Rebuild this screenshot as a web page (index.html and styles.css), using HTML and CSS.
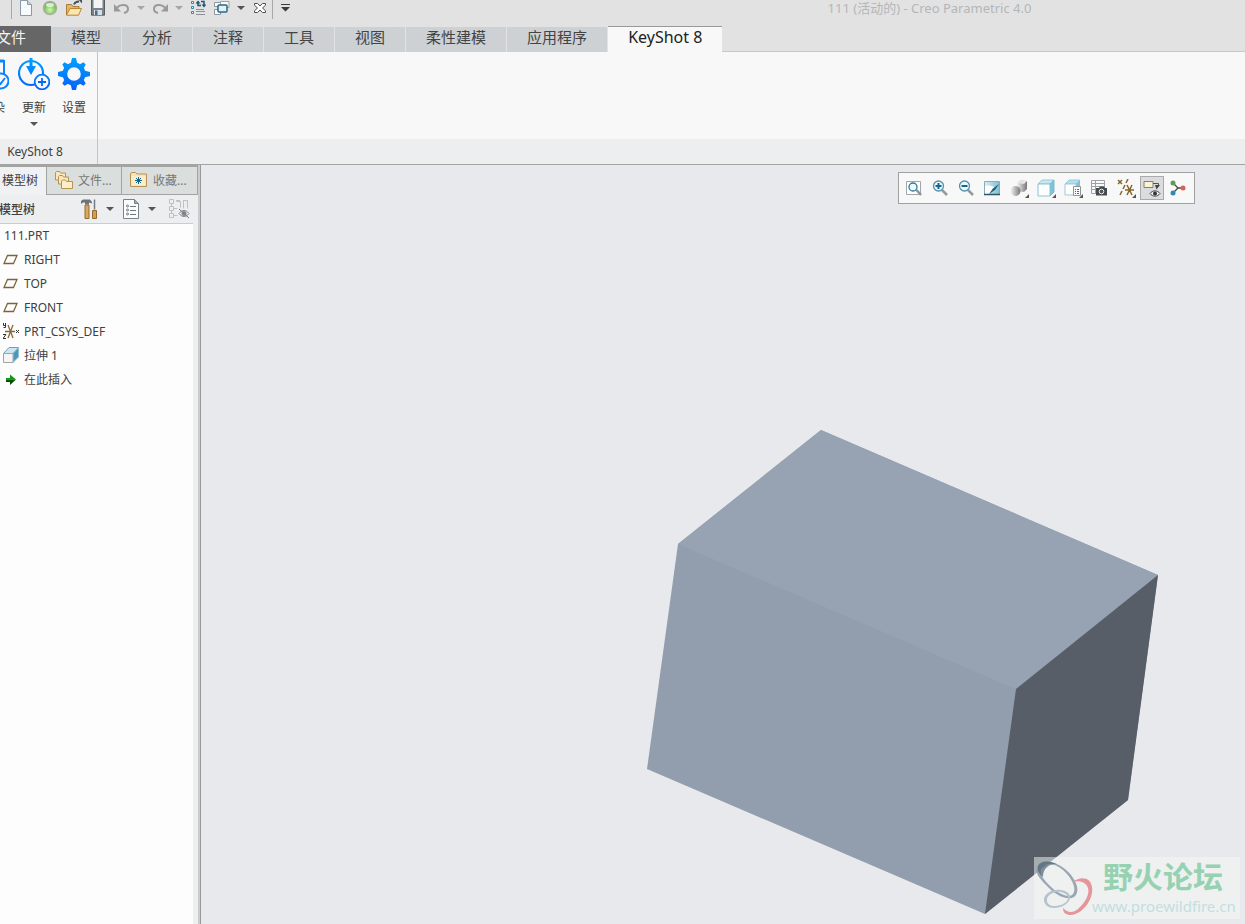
FILE: index.html
```
<!DOCTYPE html>
<html lang="zh-CN">
<head>
    <meta charset="UTF-8">
    <meta name="viewport" content="width=device-width, initial-scale=1.0">
    <title>111 (活动的) - Creo Parametric 4.0</title>
    <link rel="stylesheet" href="styles.css">
</head>
<body>
    <header class="titlebar">
        <div class="quick-access">
            <span class="divider"></span>
            <button class="quick-btn" aria-label="新建">
                <svg width="16" height="16" viewBox="0 0 16 16"><path d="M2.500 0.500h7l4 4v11h-11z" fill="#f7fbfe" stroke="#8b98a5"/><path d="M9.500 0.500v4h4" fill="#c5d3de" stroke="#8b98a5"/></svg>
            </button>
            <button class="quick-btn" aria-label="模型显示">
                <svg width="16" height="16" viewBox="0 0 16 16"><defs><radialGradient id="ball" cx=".5" cy=".65" r=".55"><stop offset="0" stop-color="#d2f5b4"/><stop offset=".6" stop-color="#8ed362"/><stop offset="1" stop-color="#76a95c"/></radialGradient></defs><circle cx="8" cy="8" r="6.500" fill="url(#ball)" stroke="#a8b0a4" stroke-width="1.500"/><ellipse cx="8" cy="5" rx="4" ry="2" fill="#d8efcb"/></svg>
            </button>
            <button class="quick-btn" aria-label="打开">
                <svg width="18" height="16" viewBox="0 0 18 16"><path d="M1.500 15V4.500h5l1.500 2h6V9" fill="#e5b765" stroke="#a97b34"/><path d="M1.500 15.200L5 8.500h11.500L13.500 15.200z" fill="#fde6ae" stroke="#b5863d"/><path d="M9 4.500c1-2.500 3-3 5-3" fill="none" stroke="#46515a" stroke-width="2"/><path d="M12.500-1.500h4.500v5z" fill="#46515a"/></svg>
            </button>
            <button class="quick-btn" aria-label="保存">
                <svg width="16" height="16" viewBox="0 0 16 16"><path d="M1 0h14v15.500H1z" fill="#7b838a"/><path d="M1.500 0v15h13V0" fill="none" stroke="#575d62"/><path d="M3.500 0h9v8h-9z" fill="#f4f4f4"/><path d="M4 10h8v5H4z" fill="#d9dee2"/><path d="M5 10.500h2.500V15H5z" fill="#427084"/></svg>
            </button>
            <button class="quick-btn" aria-label="撤消">
                <svg width="16" height="16" viewBox="0 0 16 16"><path d="M3 7.500c4-4 11-3 11 1.500 0 2-1.500 3.500-4 4" fill="none" stroke="#999" stroke-width="2"/><path d="M0 4v7.500h7z" fill="#999"/></svg>
            </button>
            <button class="quick-menu muted" aria-label="撤消列表"><span class="caret"></span></button>
            <button class="quick-btn" aria-label="重做">
                <svg width="16" height="16" viewBox="0 0 16 16"><path d="M13 7.500c-4-4-11-3-11 1.500 0 2 1.500 3.500 4 4" fill="none" stroke="#999" stroke-width="2"/><path d="M16 4v7.500H9z" fill="#999"/></svg>
            </button>
            <button class="quick-menu muted" aria-label="重做列表"><span class="caret"></span></button>
            <button class="quick-btn" aria-label="重新生成">
                <svg width="16" height="16" viewBox="0 0 16 16"><path d="M1.500 1.500h2v2h-2zM1.500 6.500h2v2h-2zM1.500 11.500h2v2h-2z" fill="#fff" stroke="#278bb1"/><path d="M6 9.500h8M6 11.500h9M6 14.500h9" stroke="#8b9196"/><path d="M11 5.500H8V2.500M11 1.500h3V5" fill="none" stroke="#1c5878" stroke-width="1.500"/><path d="M5.500 3.500L8 .5l2.500 3zM11.500 4.500L14 7.500l2.500-3z" fill="#1c5878"/></svg>
            </button>
            <button class="quick-btn" aria-label="窗口">
                <svg width="16" height="16" viewBox="0 0 16 16"><path d="M.5 2.500h9v4h-9zM.5 9.500h6v5h-6z" fill="#fafafa" stroke="#8c969d"/><path d="M6.500 1.500h8.500v6H6.500z" fill="#fafafa" stroke="#9da4aa"/><rect x="4" y="5" width="9" height="7" rx="1" fill="#e3f1f8" stroke="#286987" stroke-width="1.500"/></svg>
            </button>
            <button class="quick-menu" aria-label="窗口列表"><span class="caret"></span></button>
            <button class="quick-btn" aria-label="关闭">
                <svg width="14" height="12" viewBox="0 0 14 12"><path d="M1.500 1.500h3L7 4l2.500-2.500h3v1.700L9.500 6l3 2.800v1.700h-3L7 8l-2.500 2.500h-3V8.800L4.500 6l-3-2.800z" fill="#fff" stroke="#4d4d4d"/></svg>
            </button>
            <span class="divider"></span>
            <button class="quick-btn" aria-label="自定义快速访问工具栏">
                <svg width="9" height="8" viewBox="0 0 9 8"><path d="M0 0h9v1H0zM0 3h9L4.500 7.500z" fill="#3c3c3c"/></svg>
            </button>
        </div>
        <h1 class="window-title">111 (活动的) - Creo Parametric 4.0</h1>
    </header>

    <nav class="ribbon-tabs">
        <button class="tab tab-file">文件</button>
        <button class="tab">模型</button>
        <button class="tab">分析</button>
        <button class="tab">注释</button>
        <button class="tab">工具</button>
        <button class="tab">视图</button>
        <button class="tab">柔性建模</button>
        <button class="tab">应用程序</button>
        <button class="tab active">KeyShot 8</button>
    </nav>

    <section class="ribbon">
        <div class="group">
            <div class="group-buttons">
                <button class="big-btn">
                    <svg width="32" height="32" viewBox="0 0 32 32" fill="none" stroke="#0a84ff" stroke-width="2"><path d="M8 3h19v13M8 3v22h8"/><path d="M21 3h6" stroke-width="3"/><circle cx="24" cy="23" r="7.500" fill="#f8f8f8"/><path d="M20.500 23l3 3 4.500-6"/></svg>
                    <span>渲染</span>
                </button>
                <button class="big-btn">
                    <svg width="32" height="32" viewBox="0 0 32 32" fill="none"><defs><linearGradient id="blue" x1="0" y1="0" x2="0" y2="32" gradientUnits="userSpaceOnUse"><stop offset="0" stop-color="#00a2ff"/><stop offset="1" stop-color="#0560fa"/></linearGradient></defs><circle cx="13" cy="15" r="12" stroke="url(#blue)" stroke-width="2.200"/><path d="M11.500 0h3v8H18l-5 9-5-9h3.500z" fill="url(#blue)"/><circle cx="24" cy="24" r="7.300" fill="#f8f8f8" stroke="url(#blue)" stroke-width="1.800"/><path d="M20 24h8M24 20v8" stroke="#056af8" stroke-width="1.800"/></svg>
                    <span>更新</span>
                    <span class="caret"></span>
                </button>
                <button class="big-btn">
                    <svg width="32" height="32" viewBox="0 0 32 32"><g fill="url(#blue)"><path d="M14 0h4l1.200 5h-6.400zM14 32h4l1.200-5h-6.400zM0 14v4l5 1.200v-6.400zM32 14v4l-5 1.200v-6.400zM4.300 6.500l2.200-2.200 5 2.700L7 11.500zM27.700 6.500l-2.200-2.200-5 2.700L25 11.500zM4.300 25.500l2.200 2.200 5-2.700L7 20.500zM27.700 25.500l-2.200 2.200-5-2.700L25 20.500z"/><path fill-rule="evenodd" d="M16 4.500a11.500 11.500 0 1 0 0 23 11.500 11.500 0 0 0 0-23zm0 4.700a6.800 6.800 0 1 1 0 13.600 6.800 6.800 0 0 1 0-13.600z"/></g></svg>
                    <span>设置</span>
                </button>
            </div>
            <div class="group-label">KeyShot 8</div>
        </div>
        <div class="ribbon-rest"></div>
    </section>

    <main class="workspace">
        <aside class="navigator">
            <div class="nav-tabs">
                <button class="nav-tab active">模型树</button>
                <button class="nav-tab">
                    <svg width="20" height="20" viewBox="0 0 20 20" fill="#fae7bd" stroke="#b69355"><path d="M1.500 10V2.500l1-1h3l1 1.500h5V10z"/><path d="M4.500 14V6.500l1-1h3l1 1.500h5v7z"/><path d="M7.500 18.500V11l1-1h3l1 1.500h6v7z" fill="#fdedc8"/></svg>
                    文件...
                </button>
                <button class="nav-tab">
                    <svg width="17" height="17" viewBox="0 0 17 17"><path d="M.5 15.500V3l1-1.500h4L7 3h9.500v12.500z" fill="#f6e2b4" stroke="#b69355"/><path d="M1.500 5h14v9.500h-14z" fill="#fbedcb"/><path d="M8.500 6v7M5 9.500h7M6 7l5 5M11 7l-5 5" stroke="#166482"/></svg>
                    收藏...
                </button>
            </div>
            <div class="tree-header">
                <h2>模型树</h2>
                <div class="tree-tools">
                    <button class="tree-btn" aria-label="设置">
                        <svg width="18" height="20" viewBox="0 0 18 20"><path d="M1 5V2l2-1.500h7L12 3v1.500L9 3.500v2H5v-2H3z" fill="#6c747b"/><path d="M5 6h4v13.500H5z" fill="#d8aa61" stroke="#946a2d"/><path d="M14.500.5v10" stroke="#727b83" stroke-width="1.500"/><path d="M12.500 11.500h4v8h-4z" fill="#d59f4d" stroke="#946a2d"/></svg>
                    </button>
                    <button class="tree-menu" aria-label="设置列表"><span class="caret"></span></button>
                    <button class="tree-btn" aria-label="显示">
                        <svg width="17" height="20" viewBox="0 0 17 20"><path d="M.5.5h11l4 4v15H.5z" fill="#fbfcfd" stroke="#77828a"/><path d="M11.500.5v4h4" fill="#9fabb3" stroke="#77828a"/><g fill="none" stroke="#6e767c"><circle cx="4.500" cy="7" r="1"/><circle cx="4.500" cy="11" r="1"/><circle cx="4.500" cy="15" r="1"/><path d="M7 7.500h6M7 11.500h6M7 15.500h6"/></g></svg>
                    </button>
                    <button class="tree-menu" aria-label="显示列表"><span class="caret"></span></button>
                    <button class="tree-btn tree-filter" aria-label="隐藏">
                        <svg width="21" height="20" viewBox="0 0 21 20" fill="none"><path d="M.5.5h4v4h-4zM.5 7.500h4v4h-4zM.5 14.500h4v4h-4zM2.500 4.500v3M2.500 11.500v3M4.500 9.500h4M4.500 16.500h4M7.500 2.500h4v6M14.500 1.500v8M18.500 1.500v8M7 1.500h4M14 1.500h5" stroke="#bfc2c5"/><path d="M10 14.500c3-4 7-4 10 0-3 4-7 4-10 0z" stroke="#85898c"/><circle cx="15" cy="14.500" r="2.500" fill="#85898c"/><path d="M10 10l10 9" stroke="#777"/></svg>
                    </button>
                </div>
            </div>
            <ul class="tree">
                <li class="tree-root">111.PRT</li>
                <li>
                    <svg width="16" height="16" viewBox="0 0 16 16"><path d="M4.500 4.500h9.500l-3.500 8H1z" fill="none" stroke="#7e6538" stroke-width="1.300"/></svg>
                    RIGHT
                </li>
                <li>
                    <svg width="16" height="16" viewBox="0 0 16 16"><path d="M4.500 4.500h9.500l-3.500 8H1z" fill="none" stroke="#7e6538" stroke-width="1.300"/></svg>
                    TOP
                </li>
                <li>
                    <svg width="16" height="16" viewBox="0 0 16 16"><path d="M4.500 4.500h9.500l-3.500 8H1z" fill="none" stroke="#7e6538" stroke-width="1.300"/></svg>
                    FRONT
                </li>
                <li>
                    <svg width="16" height="16" viewBox="0 0 16 16" fill="none"><path d="M2 8.500h10M5 2l5 13M10 2L5 15" stroke="#866b38" stroke-width="1.300"/><path d="M.5 0v2.500h2V0M2.500 2v2.500h-2M0 11.500h3l-3 4h3M13 7l3 3M16 7l-3 3" stroke="#333"/></svg>
                    PRT_CSYS_DEF
                </li>
                <li>
                    <svg width="16" height="16" viewBox="0 0 16 16"><path d="M.5 6.500L6 .5h9.500L10 6.500z" fill="#c9e7f2" stroke="#789eae"/><path d="M10 6.500l5.500-6V10L10 15.500z" fill="#4b98b7" stroke="#8fc4d8"/><path d="M.5 6.500H10v9H.5z" fill="#f5f5f5" stroke="#a0a4a6"/></svg>
                    拉伸 1
                </li>
                <li>
                    <svg width="16" height="16" viewBox="0 0 16 16"><path d="M3 7h4V3.500l6 5H3z" fill="#0a9a0a"/><path d="M3 8.500h10l-6 5.500v-3H3z" fill="#064d06"/></svg>
                    在此插入
                </li>
            </ul>
        </aside>

        <section class="graphics">
            <svg class="model" viewBox="201 165 1044 759" preserveAspectRatio="xMaxYMin meet" role="img" aria-label="拉伸 1">
                <polygon points="821,430 1158,575 1128,800 985,914 647,769 678,544" fill="#929eae"/>
                <polygon points="821,430 1158,575 1016,689 678,544" fill="#97a3b3"/>
                <polygon points="1016,689 1158,575 1128,800 985,914" fill="#575e68"/>
            </svg>

            <div class="view-toolbar">
                <button class="view-btn" aria-label="重新调整">
                    <svg width="16" height="16" viewBox="0 0 16 16"><path d="M.5 1.500h14v13H.5z" fill="#fff" stroke="#a1a6a9"/><path d="M10.500 10l4.500 5" stroke="#8c9297" stroke-width="2.500"/><circle cx="7" cy="7" r="4" fill="#f1f9fc" stroke="#2b7899" stroke-width="1.300"/></svg>
                </button>
                <button class="view-btn" aria-label="放大">
                    <svg width="16" height="16" viewBox="0 0 16 16"><path d="M10 10l5 5" stroke="#949a9e" stroke-width="2.500"/><circle cx="6.500" cy="6" r="5" fill="#eef8fc" stroke="#5591ab" stroke-width="1.300"/><path d="M3.500 6h6M6.500 3v6" stroke="#15678f" stroke-width="2"/></svg>
                </button>
                <button class="view-btn" aria-label="缩小">
                    <svg width="16" height="16" viewBox="0 0 16 16"><path d="M10 10l5 5" stroke="#949a9e" stroke-width="2.500"/><circle cx="6.500" cy="6" r="5" fill="#eef8fc" stroke="#5591ab" stroke-width="1.300"/><path d="M3.500 6h6" stroke="#15678f" stroke-width="2"/></svg>
                </button>
                <button class="view-btn" aria-label="重画">
                    <svg width="16" height="16" viewBox="0 0 16 16"><defs><linearGradient id="sheet"><stop offset="0" stop-color="#dceff6"/><stop offset="1" stop-color="#7fbdd3"/></linearGradient></defs><path d="M.5 1.500h15v13H.5z" fill="url(#sheet)" stroke="#8fa9b4"/><path d="M1 6c4-1 7 0 9 1l-5 7H1z" fill="#fff"/><path d="M15 4L9 8.500 5 14l6-4z" fill="#205e78"/><path d="M0 14.500h16" stroke="#2b5668" stroke-width="1.500"/></svg>
                </button>
                <button class="view-btn has-menu" aria-label="渲染选项">
                    <svg width="18" height="17" viewBox="0 0 18 17"><defs><linearGradient id="metal"><stop offset="0" stop-color="#f4f4f4"/><stop offset="1" stop-color="#777"/></linearGradient></defs><path d="M7 3l3-2.500 7 .5v8l-3 3-7-1z" fill="url(#metal)"/><path d="M7 3l3-2.500 7 .5-3 3z" fill="#e4e4e4"/><circle cx="5.500" cy="11" r="5" fill="url(#metal)"/></svg>
                </button>
                <button class="view-btn has-menu" aria-label="显示样式">
                    <svg width="18" height="18" viewBox="0 0 18 18"><path d="M1 5l4-4h12l-4 4z" fill="#c4e7f2" stroke="#9ccbdb"/><path d="M13 5l4-4v12l-4 4z" fill="#7cc4da" stroke="#7cb9ce"/><path d="M1 5h12v12H1z" fill="#fdfefe" stroke="#8cc3d6"/></svg>
                </button>
                <button class="view-btn has-menu" aria-label="已保存方向">
                    <svg width="18" height="18" viewBox="0 0 18 18"><path d="M1 5l4-4h11l-4 4z" fill="#b2dfef" stroke="#9ccbdb"/><path d="M12 5l4-4v9l-4 4z" fill="#7cc4da"/><path d="M1 5h11v11H1z" fill="#fdfefe" stroke="#a2c9d6"/><path d="M9.500 7.500h7v9h-7z" fill="#fafafa" stroke="#8e9598"/><path d="M11 10.500h1M13 10.500h2M11 12.500h1M13 12.500h2M11 14.500h1M13 14.500h2" stroke="#666"/></svg>
                </button>
                <button class="view-btn" aria-label="视图管理器">
                    <svg width="16" height="16" viewBox="0 0 16 16"><path d="M.5.500h13v13H.5zM.5 3.500h13M.5 6.500h13M.5 9.500h13M4.500.5v13" fill="#fafafa" stroke="#9da1a3"/><path d="M5 8h3l1-1.500h4L14 8h2v7.500H5z" fill="#444b4f"/><circle cx="10.500" cy="11.500" r="2.300" fill="#555" stroke="#ededed"/></svg>
                </button>
                <button class="view-btn has-menu" aria-label="基准显示过滤器">
                    <svg width="18" height="18" viewBox="0 0 18 18" fill="none" stroke="#84652d" stroke-width="1.500"><path d="M1 1l4 4M5 1L1 5M11 0L9 4M8 6l-2 4M5 12l-2 4M8 11h9M10 6l5 10M15 6l-5 10"/></svg>
                </button>
                <button class="view-btn pressed" aria-label="注释显示">
                    <svg width="18" height="18" viewBox="0 0 18 18"><path d="M1 2.500h9v6H1z" fill="#fdf2d4" stroke="#89806a"/><path d="M10 4.500h5.500V7" fill="none" stroke="#555"/><path d="M12 6h5l-3.500 4.500z" fill="#444"/><path d="M7 14.500c2.500-3.500 7.500-3.500 10 0-2.500 3.500-7.500 3.500-10 0z" fill="#eee" stroke="#444"/><circle cx="12" cy="14.500" r="2" fill="#333"/></svg>
                </button>
                <button class="view-btn" aria-label="旋转中心">
                    <svg width="16" height="16" viewBox="0 0 16 16"><path d="M3.500 3.500L8 8l-4.500 4.500M8 8h5" fill="none" stroke="#444" stroke-width="1.300"/><circle cx="3" cy="3" r="2.500" fill="#5b9d58"/><circle cx="13" cy="8" r="2.500" fill="#d6635a"/><circle cx="3" cy="13" r="2.500" fill="#3189ad"/></svg>
                </button>
            </div>

            <div class="watermark">
                <svg width="60" height="62" viewBox="0 0 60 62"><path fill-rule="evenodd" d="M3 10C6 1 20 3 31 12c12 10 16 23 9 28-7 4-19-2-28-12C5 21 1 16 3 10zm4 2c-1 6 3 11 8 16 8 8 18 13 23 10 5-4 2-15-9-25C19 5 9 5 7 12z" fill="#8b9aa8" opacity=".85"/><path d="M4 9C8 3 16 4 22 7 15 7 9 11 9 20 5 17 3 13 4 9z" fill="#4f6577" opacity=".7"/><path fill-rule="evenodd" d="M10 44c-1-7 8-12 17-11 6 1 10 4 9 8-1 6-9 10-16 10-6 0-9-3-10-7zm3-1c0 4 3 6 8 6 7 0 13-4 13-8 0-3-3-5-7-6-7-1-14 3-14 8z" fill="#b6c2cc"/><path d="M38 25c10-7 19-4 20 5 2 12-9 27-21 28-5 0-8-2-8-7 5 5 10 5 15 1 7-6 12-15 10-21-2-6-8-8-16-6z" fill="#e5969a"/></svg>
                <div class="watermark-text">
                    <span class="watermark-name">野火论坛</span>
                    <a class="watermark-link" href="#">www.proewildfire.cn</a>
                </div>
            </div>
        </section>
    </main>
</body>
</html>
```
FILE: styles.css
```
/* General styles */
* {
    box-sizing: border-box;
}

body {
    margin: 0;
    min-height: 100vh;
    display: flex;
    flex-direction: column;
    overflow: hidden;
    font-family: "Noto Sans", "Noto Sans CJK SC", sans-serif;
    font-size: 12px;
    color: #404040;
    background: #e8e9ed;
}

button {
    padding: 0;
    border: none;
    background: none;
    font: inherit;
    color: inherit;
    cursor: pointer;
}

h1, h2, ul {
    margin: 0;
    padding: 0;
    font-weight: normal;
}

svg {
    display: block;
    flex: none;
}

.caret {
    display: block;
    border: 4px solid transparent;
    border-top-color: #555;
    border-bottom: none;
}

.muted .caret {
    border-top-color: #a5a5a5;
}

/* Title bar */
.titlebar {
    display: flex;
    height: 26px;
    background: #e2e2e2;
}

.quick-access {
    display: flex;
    align-items: center;
    height: 16px;
    padding-left: 11px;
}

.divider {
    width: 1px;
    height: 22px;
    background: #a8a8a8;
}

.divider:first-child {
    margin-right: 2px;
}

.quick-btn, .quick-menu {
    display: flex;
    align-items: center;
    justify-content: center;
    width: 24px;
    height: 16px;
}

.quick-menu {
    width: 14px;
}

.window-title {
    flex: 1;
    padding-left: 317px;
    text-align: center;
    font-size: 13px;
    line-height: 17px;
    color: #b4b7b9;
}

/* Ribbon tabs */
.ribbon-tabs {
    display: flex;
    height: 26px;
    padding-top: 1px;
    border-bottom: 1px solid #c8c8c8;
    background: #e2e2e2;
}

.tab {
    height: 25px;
    padding: 0 20px 4px;
    border-right: 1px solid #e2e2e2;
    background: #cdd1d4;
    font-size: 15px;
    line-height: 21px;
    color: #444;
    white-space: nowrap;
}

.tab-file {
    margin: -1px 0 0 -29px;
    height: 26px;
    padding: 0 25px 4px;
    border: none;
    background: #666;
    color: #f4f4f4;
}

.tab.active {
    margin-top: -1px;
    height: 26px;
    border-top: 1px solid #999;
    border-right: none;
    background: #f8f8f8;
    font-size: 16px;
    color: #222;
}

/* Ribbon */
.ribbon {
    display: flex;
    height: 113px;
    border-bottom: 1px solid #a3a3a3;
    background: #f8f8f8;
}

.group {
    display: flex;
    flex-direction: column;
    width: 125px;
    margin-left: -27px;
    border-right: 1px solid #c2c4c5;
}

.group-buttons {
    display: flex;
    flex: 1;
    padding-top: 6px;
}

.big-btn {
    display: flex;
    flex-direction: column;
    align-items: center;
    width: 40px;
}

.big-btn:first-child {
    margin-right: 1px;
}

.big-btn span:not(.caret) {
    padding: 9px 0 7px;
    line-height: 18px;
}

.big-btn .caret {
    margin-top: -2px;
}

.group-label {
    height: 25px;
    line-height: 25px;
    text-align: center;
    background: #edeef0;
}

.ribbon-rest {
    flex: 1;
    align-self: flex-end;
    height: 25px;
    background: #edeef0;
}

/* Navigator panel */
.workspace {
    display: flex;
    flex: 1;
}

.navigator {
    display: flex;
    flex-direction: column;
    width: 201px;
    border-right: 1px solid #999;
    box-shadow: inset -2px 0 #ccc;
    background: #edeef0;
}

.nav-tabs {
    display: flex;
    height: 30px;
    margin-right: 2px;
    border-top: 2px solid #a3a3a3;
}

.nav-tab {
    display: flex;
    flex: 1;
    align-items: center;
    gap: 4px;
    padding: 0 0 2px 7px;
    border-right: 1px solid #a3a3a3;
    border-bottom: 1px solid #a3a3a3;
    background: #dadedd;
    color: #777;
    white-space: nowrap;
}

.nav-tab.active {
    flex: none;
    width: 47px;
    padding-left: 2px;
    border-bottom: none;
    background: #f0f1f2;
    color: #404040;
}

.nav-tab:last-child {
    gap: 6px;
    padding-left: 8px;
}

.tree-header {
    display: flex;
    align-items: center;
    justify-content: space-between;
    height: 29px;
    margin-right: 7px;
    border-bottom: 1px solid #ccc;
}

.tree-header h2 {
    margin-left: -1px;
    font-size: 12px;
    font-weight: 500;
}

.tree-tools {
    display: flex;
    align-items: center;
    padding-right: 3px;
}

.tree-btn, .tree-menu {
    display: flex;
    align-items: center;
    justify-content: center;
    width: 22px;
    height: 24px;
}

.tree-menu {
    width: 20px;
}

.tree-filter {
    margin-left: 6px;
}

.tree {
    flex: 1;
    margin-right: 7px;
    list-style: none;
    background: #fdfdfd;
}

.tree li {
    display: flex;
    align-items: center;
    gap: 5px;
    height: 24px;
    padding: 0 0 2px 3px;
}

.tree .tree-root {
    padding-left: 4px;
}

/* Graphics area */
.graphics {
    position: relative;
    flex: 1;
    background: #e8e9ed;
}

.model {
    width: 100%;
    height: auto;
}

.view-toolbar {
    position: absolute;
    top: 7px;
    right: 50px;
    display: flex;
    gap: 2px;
    padding: 3px 4px 3px 3px;
    border: 1px solid #a1a1a1;
    background: #f8f8f8;
}

.view-btn {
    position: relative;
    display: flex;
    align-items: center;
    justify-content: center;
    width: 24px;
    height: 24px;
}

.view-btn.has-menu {
    width: 25px;
}

.view-btn.has-menu::after {
    content: "";
    position: absolute;
    right: 2px;
    bottom: 2px;
    border-left: 4px solid transparent;
    border-bottom: 4px solid #555;
}

.view-btn.pressed {
    border: 1px solid #aaa;
    background: #dadcdf;
}

.watermark {
    position: absolute;
    right: 5px;
    bottom: 5px;
    display: flex;
    width: 206px;
    height: 62px;
    background: rgba(246, 249, 246, 0.5);
}

.watermark-text {
    display: flex;
    flex-direction: column;
    flex: 1;
    margin-left: -2px;
}

.watermark-name {
    padding-left: 11px;
    font-family: "Noto Sans CJK SC", sans-serif;
    font-size: 30px;
    font-weight: bold;
    line-height: 36px;
    color: #96d2b2;
}

.watermark-link {
    font-family: "Noto Sans", sans-serif;
    font-size: 15px;
    line-height: 26px;
    color: #c2dee0;
    text-decoration: none;
}
```
